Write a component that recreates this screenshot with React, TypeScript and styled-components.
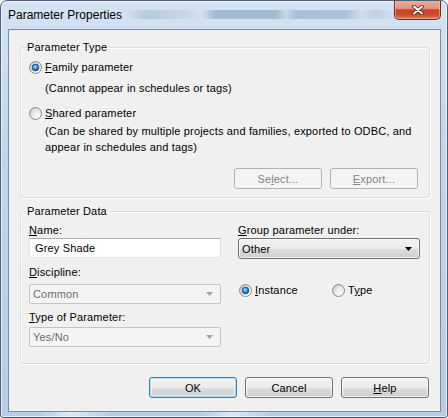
import styled, { createGlobalStyle } from "styled-components";
import { useId } from "react";

const GlobalStyle = createGlobalStyle`
  html, body {
    margin: 0;
    padding: 0;
    background: #ffffff;
  }
  body {
    font-family: "Liberation Sans", Arial, sans-serif;
    font-size: 11px;
    letter-spacing: 0.16px;
    color: #000;
  }
  * {
    box-sizing: border-box;
  }
`;

const Window = styled.div`
  width: 448px;
  height: 418px;
  display: flex;
  flex-direction: column;
  padding: 0 6px 5px 7px;
  border: 1px solid #4d5f76;
  border-radius: 7px 7px 3px 3px;
  background:
    linear-gradient(90deg, rgba(255,255,255,0) 0, rgba(255,255,255,0) 40px, rgba(255,255,255,.55) 70px, rgba(255,255,255,0) 110px, rgba(255,255,255,0) 200px, rgba(255,255,255,.5) 230px, rgba(255,255,255,0) 270px) 0 100% / 100% 6px no-repeat,
    linear-gradient(180deg, #d4e3f2 0%, #c0d5eb 40%, #b7cde6 100%);
  box-shadow: inset 0 0 0 1px rgba(255, 255, 255, 0.65);
  overflow: hidden;
`;

const TitleBar = styled.div`
  height: 28px;
  display: flex;
  align-items: flex-start;
  justify-content: space-between;
  margin: 0 -6px 0 -7px;
  padding: 0 6px 0 7px;
  background:
    linear-gradient(
        90deg,
        rgba(70, 100, 140, 0) 0,
        rgba(70, 100, 140, 0) 125px,
        rgba(70, 100, 140, 0.2) 145px,
        rgba(70, 100, 140, 0.08) 185px,
        rgba(70, 100, 140, 0) 200px,
        rgba(50, 80, 120, 0.28) 215px,
        rgba(50, 80, 120, 0.28) 275px,
        rgba(70, 100, 140, 0.08) 285px,
        rgba(50, 80, 120, 0.24) 295px,
        rgba(50, 80, 120, 0.22) 345px,
        rgba(70, 100, 140, 0.04) 360px,
        rgba(70, 100, 140, 0.14) 375px,
        rgba(70, 100, 140, 0) 395px
      )
      0 9px / 100% 9px no-repeat;
`;

const Title = styled.span`
  align-self: center;
  font-family: "Liberation Sans", Arial, sans-serif;
  font-size: 12px;
  line-height: 14px;
  letter-spacing: 0;
  color: #000;
`;

const CloseButton = styled.div`
  width: 47px;
  height: 20px;
  margin-top: -1px;
  display: flex;
  align-items: center;
  justify-content: center;
  border: 1px solid #6d2a1e;
  border-top: none;
  border-radius: 0 0 5px 5px;
  background: linear-gradient(
    180deg,
    #eab2a4 0%,
    #df8f7b 45%,
    #c8462a 52%,
    #c84a2b 75%,
    #e07a5e 100%
  );
  box-shadow: inset 0 0 0 1px rgba(255, 210, 200, 0.45);
`;

const Client = styled.div`
  flex: 1;
  display: flex;
  flex-direction: column;
  background: #f0f0f0;
  border: 1px solid #7b8ca5;
`;

const Group = styled.fieldset<{ $mt: number }>`
  margin: ${(p) => p.$mt}px 10px 0 11px;
  padding: 0;
  min-width: 0;
  border: 1px solid #d5dfe5;
  border-radius: 3px;
  box-shadow: inset 1px 1px 0 #ffffff, 1px 1px 0 #ffffff;
`;

const Legend = styled.legend`
  margin-left: 4px;
  padding: 0 2px;
  font-size: 11px;
  line-height: 13px;
  color: #000;
`;

const TypeBody = styled.div`
  display: flex;
  flex-direction: column;
  padding: 7px 11px 8px 8px;
`;

const RadioRow = styled.label<{ $mt?: number }>`
  display: flex;
  align-items: center;
  gap: 3px;
  height: 13px;
  line-height: 13px;
  margin-top: ${(p) => p.$mt ?? 0}px;
  white-space: nowrap;
`;

const Note = styled.div<{ $mt: number }>`
  margin-top: ${(p) => p.$mt}px;
  padding-left: 16px;
  line-height: 16px;
  white-space: nowrap;
`;

const ButtonRow = styled.div<{ $mt: number; $pr: number }>`
  display: flex;
  justify-content: flex-end;
  gap: 8px;
  margin-top: ${(p) => p.$mt}px;
  padding-right: ${(p) => p.$pr}px;
`;

const Button = styled.div<{ $variant?: "default" | "disabled" }>`
  width: 88px;
  height: 21px;
  display: flex;
  align-items: center;
  justify-content: center;
  border-radius: 3px;
  font-size: 11px;
  border: 1px solid
    ${(p) =>
      p.$variant === "default"
        ? "#3c7fb1"
        : p.$variant === "disabled"
        ? "#adb2b5"
        : "#707070"};
  color: ${(p) => (p.$variant === "disabled" ? "#838383" : "#000")};
  background: ${(p) =>
    p.$variant === "disabled"
      ? "#f4f4f4"
      : "linear-gradient(180deg, #f2f2f2 0%, #ebebeb 50%, #dddddd 51%, #cfcfcf 100%)"};
  box-shadow: ${(p) =>
    p.$variant === "disabled"
      ? "none"
      : p.$variant === "default"
      ? "inset 0 0 0 1px rgba(110,200,245,0.55), inset 0 0 0 2px rgba(255,255,255,0.45)"
      : "inset 0 0 0 1px rgba(255,255,255,0.7)"};
`;

const DataBody = styled.div`
  display: grid;
  grid-template-columns: 192px 182px;
  column-gap: 17px;
  padding: 6px 9px 16px 8px;
`;

const Column = styled.div`
  display: flex;
  flex-direction: column;
`;

const FieldLabel = styled.div<{ $mt?: number }>`
  line-height: 13px;
  margin-top: ${(p) => p.$mt ?? 0}px;
  white-space: nowrap;
`;

const TextBox = styled.input`
  margin-top: 1px;
  width: 100%;
  height: 20px;
  padding: 0 5px;
  font-family: "Liberation Sans", Arial, sans-serif;
  font-size: 11px;
  letter-spacing: 0.16px;
  color: #000;
  background: #ffffff;
  border: 1px solid;
  border-color: #abadb3 #dbdfe6 #e3e9ef #e2e3ea;
  outline: none;
`;

const Combo = styled.div<{ $mt: number; $h: number; $disabled?: boolean }>`
  margin-top: ${(p) => p.$mt}px;
  height: ${(p) => p.$h}px;
  display: flex;
  align-items: center;
  justify-content: space-between;
  padding: 0 7px 0 3px;
  border-radius: ${(p) => (p.$disabled ? "2px" : "3px")};
  border: 1px solid ${(p) => (p.$disabled ? "#c2c5c8" : "#707070")};
  color: ${(p) => (p.$disabled ? "#6d6d6d" : "#000")};
  background: ${(p) =>
    p.$disabled
      ? "#f4f4f4"
      : "linear-gradient(180deg, #f2f2f2 0%, #ebebeb 50%, #dddddd 51%, #cfcfcf 100%)"};
  box-shadow: ${(p) =>
    p.$disabled ? "none" : "inset 0 0 0 1px rgba(255,255,255,0.7)"};
`;

const ScopeRow = styled.div`
  display: grid;
  grid-template-columns: 93px auto;
  margin-top: 25px;
  padding-left: 1px;
`;

const Footer = styled(ButtonRow)`
  margin-bottom: 13px;
`;

const Key = styled.span`
  text-decoration: underline;
  text-underline-offset: 1px;
`;

function RadioMark({ checked }: { checked?: boolean }) {
  const id = useId().replace(/:/g, "");
  return (
    <svg width="13" height="13" viewBox="0 0 13 13">
      <defs>
        <radialGradient id={`${id}f`} cx="70%" cy="72%" r="85%">
          <stop offset="0" stopColor="#fdfdfd" />
          <stop offset="0.6" stopColor="#e6e6e6" />
          <stop offset="1" stopColor="#bdbdbd" />
        </radialGradient>
        <radialGradient id={`${id}d`} cx="45%" cy="40%" r="65%">
          <stop offset="0" stopColor="#b6e3fd" />
          <stop offset="0.45" stopColor="#3a93dc" />
          <stop offset="1" stopColor="#0d3f74" />
        </radialGradient>
      </defs>
      <circle cx="6.5" cy="6.5" r="6" fill={`url(#${id}f)`} stroke="#8a8a8a" />
      {checked && (
        <circle
          cx="6.5"
          cy="6.5"
          r="3.4"
          fill={`url(#${id}d)`}
          stroke="#1b4a7c"
          strokeWidth="0.7"
        />
      )}
    </svg>
  );
}

function Arrow({ disabled }: { disabled?: boolean }) {
  return (
    <svg width="7" height="4" viewBox="0 0 7 4">
      <path d="M0 0h7L3.5 4z" fill={disabled ? "#a3a3a3" : "#000"} />
    </svg>
  );
}

export default function App() {
  return (
    <>
      <GlobalStyle />
      <Window>
        <TitleBar>
          <Title>Parameter Properties</Title>
          <CloseButton>
            <svg width="12" height="10" viewBox="0 0 12 10">
              <path
                d="M2 1.5l8 7M10 1.5l-8 7"
                stroke="#4a1b14"
                strokeWidth="3.6"
                strokeLinecap="round"
              />
              <path
                d="M2 1.5l8 7M10 1.5l-8 7"
                stroke="#ffffff"
                strokeWidth="2"
                strokeLinecap="round"
              />
            </svg>
          </CloseButton>
        </TitleBar>

        <Client>
          <Group $mt={11}>
            <Legend>Parameter Type</Legend>
            <TypeBody>
              <RadioRow>
                <RadioMark checked />
                <span>
                  <Key>F</Key>amily parameter
                </span>
              </RadioRow>
              <Note $mt={6}>(Cannot appear in schedules or tags)</Note>
              <RadioRow $mt={11}>
                <RadioMark />
                <span>
                  <Key>S</Key>hared parameter
                </span>
              </RadioRow>
              <Note $mt={3}>
                (Can be shared by multiple projects and families, exported to ODBC, and
                <br />
                appear in schedules and tags)
              </Note>
              <ButtonRow $mt={13} $pr={0}>
                <Button $variant="disabled">
                  <span>
                    Se<Key>l</Key>ect...
                  </span>
                </Button>
                <Button $variant="disabled">
                  <span>
                    <Key>E</Key>xport...
                  </span>
                </Button>
              </ButtonRow>
            </TypeBody>
          </Group>

          <Group $mt={7}>
            <Legend>Parameter Data</Legend>
            <DataBody>
              <Column>
                <FieldLabel>
                  <Key>N</Key>ame:
                </FieldLabel>
                <TextBox defaultValue="Grey Shade" />
                <FieldLabel $mt={8}>
                  <Key>D</Key>iscipline:
                </FieldLabel>
                <Combo $mt={5} $h={20} $disabled>
                  <span>Common</span>
                  <Arrow disabled />
                </Combo>
                <FieldLabel $mt={7}>
                  <Key>T</Key>ype of Parameter:
                </FieldLabel>
                <Combo $mt={3} $h={20} $disabled>
                  <span>Yes/No</span>
                  <Arrow disabled />
                </Combo>
              </Column>
              <Column>
                <FieldLabel>
                  <Key>G</Key>roup parameter under:
                </FieldLabel>
                <Combo $mt={1} $h={21}>
                  <span>Other</span>
                  <Arrow />
                </Combo>
                <ScopeRow>
                  <RadioRow>
                    <RadioMark checked />
                    <span>
                      <Key>I</Key>nstance
                    </span>
                  </RadioRow>
                  <RadioRow>
                    <RadioMark />
                    <span>
                      T<Key>y</Key>pe
                    </span>
                  </RadioRow>
                </ScopeRow>
              </Column>
            </DataBody>
          </Group>

          <Footer $mt={13} $pr={11}>
            <Button $variant="default">OK</Button>
            <Button>Cancel</Button>
            <Button>
              <span>
                <Key>H</Key>elp
              </span>
            </Button>
          </Footer>
        </Client>
      </Window>
    </>
  );
}
